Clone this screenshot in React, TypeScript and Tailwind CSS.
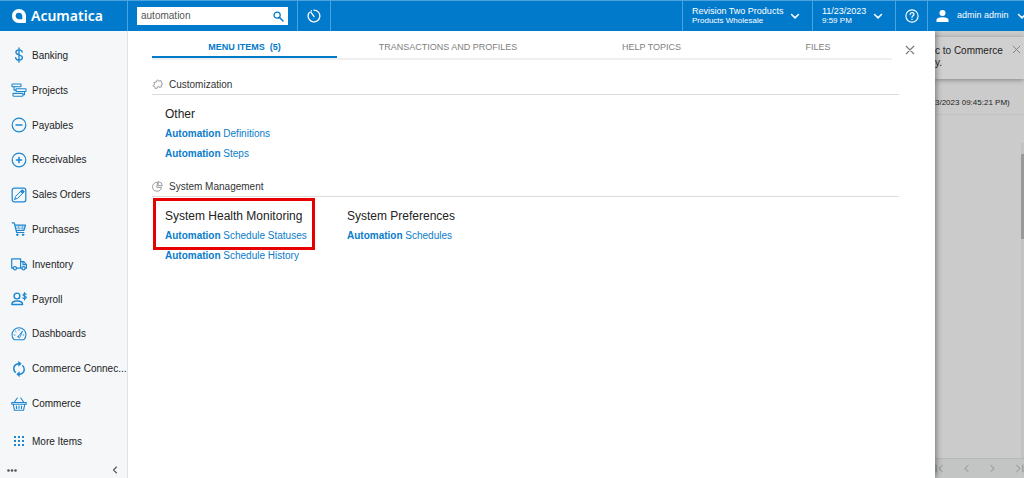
import { useState, type ReactNode } from 'react';

function Icon({ children, size = 16, className = '' }: { children: ReactNode; size?: number; className?: string }) {
  return (
    <svg
      width={size}
      height={size}
      viewBox="0 0 16 16"
      fill="none"
      stroke="currentColor"
      strokeLinecap="round"
      strokeLinejoin="round"
      className={`shrink-0 ${className}`}
      aria-hidden="true"
    >
      {children}
    </svg>
  );
}

function Chevron() {
  return (
    <Icon size={10} className="text-white">
      <path d="M2.5 5.5 8 11l5.5-5.5" strokeWidth="2.4" />
    </Icon>
  );
}

const modules: { name: string; icon: ReactNode }[] = [
  {
    name: 'Banking',
    icon: <path d="M8 .8v14.400M11.200 5C11 3.500 9.700 2.800 8 2.800c-1.700 0-3.100.8-3.100 2.400C4.900 8.600 11.400 7 11.400 10.600c0 1.700-1.500 2.600-3.400 2.600-1.900 0-3.200-.8-3.400-2.500" strokeWidth="1.300" />,
  },
  {
    name: 'Projects',
    icon: (
      <g strokeWidth="1.100">
        <rect x="1" y="2" width="9" height="2.800" rx=".6" />
        <rect x="5" y="6.700" width="10" height="2.800" rx=".6" />
        <rect x="2" y="11.400" width="10" height="2.800" rx=".6" />
        <path d="M3 4.800v3.300h2M13.500 9.500v3.300H12" />
      </g>
    ),
  },
  {
    name: 'Payables',
    icon: (
      <>
        <circle cx="8" cy="8" r="6.800" strokeWidth="1.200" />
        <path d="M5 8h6" strokeWidth="1.400" />
      </>
    ),
  },
  {
    name: 'Receivables',
    icon: (
      <>
        <circle cx="8" cy="8" r="6.800" strokeWidth="1.200" />
        <path d="M5.500 8h5M8 5.500v5" strokeWidth="1.600" />
      </>
    ),
  },
  {
    name: 'Sales Orders',
    icon: (
      <>
        <rect x="1.200" y="1.200" width="13.600" height="13.600" rx="2" strokeWidth="1.200" />
        <path d="m3.800 12.200.8-2.800 5.800-5.800 2 2-5.800 5.800-2.800.8Z" />
        <path d="m9.700 4.300 1.700-1.500 1.800 1.800-1.500 1.700Z" fill="currentColor" />
      </>
    ),
  },
  {
    name: 'Purchases',
    icon: (
      <>
        <path d="M1.200 1.800h2l2.500 9.700h7.200M3.900 4.200h10.600l-1.700 5.300H5.200" strokeWidth="1.200" />
        <path d="M5 6h8.500M5.300 7.700h8M7.500 4.500l.5 5M11.500 4.500l-.5 5" strokeWidth=".5" />
        <circle cx="6.300" cy="13.700" r=".8" fill="currentColor" />
        <circle cx="12" cy="13.700" r=".8" fill="currentColor" />
      </>
    ),
  },
  {
    name: 'Inventory',
    icon: (
      <g strokeWidth="1.200">
        <path d="M2.200 12.200H.7V2.800h8.900v9.400H5.600M9.600 5.600h3.200l2.600 3v3.600h-1.200M9.600 12.200h1.200M12 6v2.700h3" />
        <circle cx="3.900" cy="12.200" r="1.600" />
        <circle cx="12.500" cy="12.200" r="1.600" />
      </g>
    ),
  },
  {
    name: 'Payroll',
    icon: (
      <>
        <circle cx="6" cy="5" r="2.900" strokeWidth="1.400" />
        <path d="M.8 13.500c0-2.200 2-3.500 5.200-3.500s5.600 1.300 5.600 3.500H.8Z" strokeWidth="1.400" />
        <path d="M13.600 1.500v7.500M15.200 3.400c-.6-.9-3.200-.9-3.200.6s3.300.8 3.300 2.400-2.900 1.500-3.500.5" strokeWidth="1.100" />
      </>
    ),
  },
  {
    name: 'Dashboards',
    icon: (
      <>
        <path d="M3.100 13.700a7 7 0 1 1 9.800 0H3.100Z" strokeWidth="1.100" />
        <path d="M7 10.700 11.600 5 8.700 11.600C7.800 12.300 6.500 11.600 7 10.700Z" strokeWidth=".9" />
        <path d="M3.200 9h.8M4.500 5.200l.6.600M8 3.500v.8M12 9h.8" strokeWidth=".9" />
      </>
    ),
  },
  {
    name: 'Commerce Connec...',
    icon: (
      <>
        <path d="M4.300 11.200C2 9 2.200 5.200 5 3.500 5.900 3 6.800 2.800 8 2.800M11.700 4.800C14 7 13.800 10.800 11 12.500c-.9.500-1.800.7-3 .7" strokeWidth="1.500" />
        <path d="M7.800.6 10.300 2.800 7.800 5ZM8.200 11 5.700 13.200l2.500 2.200Z" fill="currentColor" strokeWidth=".6" />
      </>
    ),
  },
  {
    name: 'Commerce',
    icon: (
      <>
        <path d="M.8 6.500h14.400v1.700H.8ZM2.200 8.200l1.300 6.100h9l1.300-6.100M3.300 6.300 6.300 2M12.700 6.300 9.700 2" strokeWidth="1.100" />
        <path d="M5.500 10v2.500M8 10v2.500M10.500 10v2.500" strokeWidth="1.100" />
      </>
    ),
  },
];

const tabs = [
  { label: 'MENU ITEMS\u00a0 (5)', width: 'w-[25%]' },
  { label: 'TRANSACTIONS AND PROFILES', width: 'w-[30%]' },
  { label: 'HELP TOPICS', width: 'w-[25%]' },
  { label: 'FILES', width: 'w-[20%]' },
];

function Header() {
  const [query, setQuery] = useState('automation');

  return (
    <header className="relative z-20 flex h-[31px] shrink-0 items-stretch border-t border-[#4ba3de] bg-[#027acc] text-white">
      <a href="#home" className="flex w-32 shrink-0 items-center gap-[5px] border-r border-[#4ba3de] pl-3">
        <svg width="14" height="14" viewBox="0 0 14 14" className="shrink-0" aria-hidden="true">
          <path
            fillRule="evenodd"
            fill="currentColor"
            d="M7 0c4 0 7 3 7 7v6.200c0 .5-.3.800-.8.800H7C3 14 0 11 0 7s3-7 7-7Zm0 3.700A3.200 3.200 0 0 0 3.700 7c0 1.900 1.400 3.300 3.300 3.300h3.300V7C10.300 5.100 8.900 3.700 7 3.700Z"
          />
        </svg>
        <span className="font-['Noto_Sans',sans-serif] text-[14px] leading-4 font-semibold">Acumatica</span>
      </a>

      <div className="flex w-[170px] shrink-0 items-center border-r border-[#4ba3de] px-[9px]">
        <label className="flex h-[18px] w-full items-center bg-white px-1 text-[#027acc]">
          <input
            type="text"
            aria-label="Search"
            autoFocus
            value={query}
            onChange={(e) => setQuery(e.target.value)}
            className="w-full min-w-0 flex-1 text-[10px] leading-3 text-[#555] outline-none"
          />
          <Icon size={11}>
            <circle cx="6" cy="6" r="4.500" strokeWidth="1.800" />
            <path d="m9.500 9.500 5 5" strokeWidth="2.200" />
          </Icon>
        </label>
      </div>

      <button type="button" aria-label="Recent" className="flex w-[33px] shrink-0 items-center justify-center border-r border-[#4ba3de]">
        <Icon size={14}>
          <path d="M8 1.300a6.700 6.700 0 1 1-6 3.700M4.300 3.500 8 8.500" strokeWidth="1.500" />
          <path d="M2.600 3.800h.1M5 2h.1" strokeWidth="1.500" />
        </Icon>
      </button>

      <div className="flex-1" />

      <button type="button" className="flex w-[130px] shrink-0 items-center justify-between border-l border-[#4ba3de] pr-3 pl-[9px] text-left">
        <span>
          <span className="block text-[9px] leading-[10px]">Revision Two Products</span>
          <span className="block text-[8px] leading-[10px]">Products Wholesale</span>
        </span>
        <Chevron />
      </button>
      <button type="button" className="flex w-[83px] shrink-0 items-center justify-between border-l border-[#4ba3de] pr-3 pl-[9px] text-left">
        <span>
          <span className="block text-[9px] leading-[10px]">11/23/2023</span>
          <span className="block text-[8px] leading-[10px]">9:59 PM</span>
        </span>
        <Chevron />
      </button>
      <button type="button" aria-label="Help" className="flex w-8 shrink-0 items-center justify-center border-l border-[#4ba3de]">
        <Icon size={14}>
          <circle cx="8" cy="8" r="7" strokeWidth="1.300" />
          <path d="M5.800 6.300C5.900 3.300 10.300 3.500 10.200 6.100 10.100 7.600 8 7.700 8 9.500M8 11.500v.4" strokeWidth="1.400" />
        </Icon>
      </button>
      <button type="button" className="flex w-[97px] shrink-0 items-center overflow-hidden border-l border-[#4ba3de] pl-2">
        <svg width="13" height="12" viewBox="0 0 13 12" fill="currentColor" className="shrink-0" aria-hidden="true">
          <circle cx="6.500" cy="3" r="3" />
          <path d="M.5 12V9.800C.5 8 3.600 7.200 6.500 7.200s6 .8 6 2.600V12Z" />
        </svg>
        <span className="mr-2 ml-2 text-[9px] whitespace-nowrap">admin admin</span>
        <Chevron />
      </button>
    </header>
  );
}

function Sidebar() {
  return (
    <nav className="relative z-20 flex w-32 shrink-0 flex-col border-r border-[#dfe2e6] bg-[#f5f7f9] pt-[7px] text-[10px] text-[#222]">
      <ul className="flex flex-1 flex-col">
        {modules.map((item) => (
          <li key={item.name} className="flex flex-1">
            <a href="#module" className="flex w-full items-center gap-[5px] pl-[11px] whitespace-nowrap">
              <Icon className="text-[#1c86d1]">{item.icon}</Icon>
              {item.name}
            </a>
          </li>
        ))}
      </ul>
      <a href="#more" className="flex h-[41px] shrink-0 items-center gap-[5px] pl-[11px]">
        <svg width="16" height="16" viewBox="0 0 16 16" fill="#1c86d1" className="shrink-0" aria-hidden="true">
          {[2, 6, 10].map((y) =>
            [3, 7, 11].map((x) => <rect key={`${x}-${y}`} x={x} y={y} width="2" height="2" />)
          )}
        </svg>
        More Items
      </a>
      <div className="flex h-4 shrink-0 items-center justify-between pr-2 pl-[7px] text-[#555]">
        <button type="button" aria-label="Options">
          <svg width="10" height="3" viewBox="0 0 10 3" fill="currentColor" aria-hidden="true">
            <circle cx="1.500" cy="1.500" r="1.300" />
            <circle cx="5" cy="1.500" r="1.300" />
            <circle cx="8.500" cy="1.500" r="1.300" />
          </svg>
        </button>
        <button type="button" aria-label="Collapse menu">
          <Icon size={8}>
            <path d="M11 2 5 8l6 6" strokeWidth="2.200" />
          </Icon>
        </button>
      </div>
    </nav>
  );
}

function SectionTitle({ icon, title }: { icon: ReactNode; title: string }) {
  return (
    <h2 className="flex h-5 items-center gap-[6px] border-b border-[#dcdcdc] text-[10px] text-[#333]">
      <Icon size={11} className="text-[#888]">{icon}</Icon>
      {title}
    </h2>
  );
}

function GroupTitle({ children }: { children: ReactNode }) {
  return <h3 className="text-xs leading-5 whitespace-nowrap text-[#222]">{children}</h3>;
}

function ResultLink({ rest }: { rest: string }) {
  return (
    <a href="#result" className="block text-[10px] leading-5 whitespace-nowrap text-[#0a7ccb]">
      <b>Automation</b> {rest}
    </a>
  );
}

function SearchPanel() {
  const [active, setActive] = useState(0);

  return (
    <main className="relative z-10 min-w-0 flex-1 bg-white pl-6 shadow-[1px_0_6px_rgba(0,0,0,0.45)]">
      <div className="flex">
        <div role="tablist" className="flex h-[29px] flex-1 border-b-2 border-[#f0f0f0]">
          {tabs.map((tab, i) => (
            <button
              key={tab.label}
              type="button"
              role="tab"
              aria-selected={active === i}
              onClick={() => setActive(i)}
              className={`${tab.width} h-[27px] border-b-2 pt-2 text-[9px] ${
                active === i ? 'border-[#027acc] font-bold text-[#027acc]' : 'border-transparent text-[#808080]'
              }`}
            >
              {tab.label}
            </button>
          ))}
        </div>
        <button type="button" aria-label="Close" className="flex w-[43px] items-center justify-center pt-2 pr-2 text-[#777]">
          <Icon size={10}>
            <path d="m2 2 12 12M14 2 2 14" strokeWidth="1.800" />
          </Icon>
        </button>
      </div>

      <section className="mt-[15px] mr-9">
        <SectionTitle
          title="Customization"
          icon={
            <path d="M3.500 5 7 4C5.800 1.500 8.800.3 9.600 3.200L13 2.200 13.700 5.600C16.400 5.400 16.200 8.500 13.500 8.200L13.800 11.500 10.500 12.300C10.700 9.800 7.600 10 8 13L4.800 14 4 10.800C1.300 11.800.3 8.700 3.300 8Z" strokeWidth="1.200" />
          }
        />
        <div className="pt-[9px] pl-[13px]">
          <GroupTitle>Other</GroupTitle>
          <ResultLink rest="Definitions" />
          <ResultLink rest="Steps" />
        </div>
      </section>

      <section className="mt-[13px] mr-9">
        <SectionTitle
          title="System Management"
          icon={
            <>
              <path d="M7.500 1.800a6.500 6.500 0 1 0 6.300 7.400H7.500Z" strokeWidth="1.200" />
              <path d="M9.500 1A6 6 0 0 1 15 6.800H9.500Z" strokeWidth="1.200" />
            </>
          }
        />
        <div className="flex pt-[9px] pl-[13px]">
          <div className="w-[182px]">
            <div className="relative w-[138px]">
              <GroupTitle>System Health Monitoring</GroupTitle>
              <ResultLink rest="Schedule Statuses" />
              <div className="pointer-events-none absolute -inset-x-3 -top-2 -bottom-1 border-3 border-[#e60000]" />
            </div>
            <ResultLink rest="Schedule History" />
          </div>
          <div>
            <GroupTitle>System Preferences</GroupTitle>
            <ResultLink rest="Schedules" />
          </div>
        </div>
      </section>
    </main>
  );
}

// Form behind the search panel, dimmed while the panel is open
function DimmedForm() {
  return (
    <aside className="flex w-[89px] shrink-0 flex-col overflow-hidden bg-[#cbcbcb] text-[#222]">
      <div className="mt-[6px] flex h-[42px] shrink-0 justify-between bg-[#d0d0d0] pt-2 pr-[3px] shadow-[0_1px_5px_rgba(0,0,0,0.35)]">
        <p className="text-[10px] leading-3 whitespace-nowrap">
          c to Commerce
          <br />
          y.
        </p>
        <button type="button" aria-label="Dismiss" className="self-start text-[#777]">
          <Icon size={9}>
            <path d="m2 2 12 12M14 2 2 14" strokeWidth="1.500" />
          </Icon>
        </button>
      </div>
      <p className="mt-4 h-5 shrink-0 border-b border-[#c2c2c2] text-[8px] leading-4 whitespace-nowrap">3/2023 09:45:21 PM)</p>
      <div className="mt-7 flex flex-1 justify-end">
        <div className="w-[3px] bg-[#c2c2c2] pt-[11px]">
          <div className="h-[85px] bg-[#999]" />
        </div>
      </div>
      <div className="flex h-5 shrink-0 items-center justify-between border-t border-[#b8b8b8] bg-[#c3c5c5] text-[#888]">
        <button type="button" aria-label="First page">
          <Icon size={9}><path d="M2 2v12M13 2.500 7 8l6 5.500" strokeWidth="1.600" /></Icon>
        </button>
        <button type="button" aria-label="Previous page">
          <Icon size={9}><path d="M11 2.500 5 8l6 5.500" strokeWidth="1.600" /></Icon>
        </button>
        <button type="button" aria-label="Next page">
          <Icon size={9}><path d="M5 2.500 11 8l-6 5.500" strokeWidth="1.600" /></Icon>
        </button>
        <button type="button" aria-label="Last page">
          <Icon size={9}><path d="M3 2.500 9 8l-6 5.500M14 2v12" strokeWidth="1.600" /></Icon>
        </button>
      </div>
    </aside>
  );
}

export default function App() {
  return (
    <div className="flex min-h-screen flex-col font-['Liberation_Sans',Arial,sans-serif]">
      <Header />
      <div className="flex flex-1">
        <Sidebar />
        <SearchPanel />
        <DimmedForm />
      </div>
    </div>
  );
}
